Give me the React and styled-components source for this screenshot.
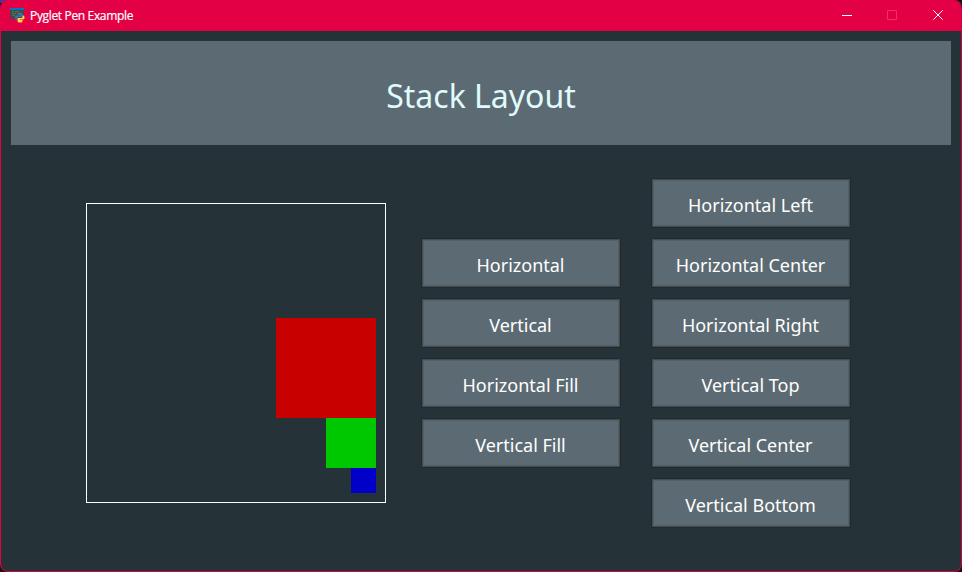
import React from "react";
import styled, { createGlobalStyle } from "styled-components";

const GlobalStyle = createGlobalStyle`
  html, body { margin: 0; background: #0b0b0d; overflow: hidden; }
  * { box-sizing: border-box; }
`;

const Desktop = styled.div`
  width: 962px;
  height: 572px;
  background: linear-gradient(to right, #55309b 0 8px, transparent 8px) 0 0 / 100% 3px no-repeat, #1a1114;
`;

const Window = styled.div`
  display: flex;
  flex-direction: column;
  width: 962px;
  height: 572px;
  border: 1px solid #e30045;
  border-top: 0;
  border-right-color: #c8063f;
  border-bottom-color: #c8063f;
  border-radius: 8px;
  background: #253237;
  overflow: hidden;
  font-family: "Noto Sans", sans-serif;
`;

const TitleBar = styled.header`
  display: flex;
  align-items: center;
  flex: none;
  height: 31px;
  padding-left: 8px;
  background: #e30045;
  color: #fff;
`;

const AppIcon = styled.svg`
  display: block;
  flex: none;
  margin-bottom: 1px;
`;

const WindowTitle = styled.span`
  flex: 1;
  margin-left: 5px;
  font-family: "Open Sans", "Noto Sans", sans-serif;
  font-size: 12px;
  line-height: 16px;
  letter-spacing: -0.34px;
  -webkit-text-stroke: 0.2px #fff;
`;

const WindowButton = styled.button`
  display: grid;
  place-items: center;
  width: 46px;
  height: 31px;
  padding: 0 0 1px;
  border: 0;
  background: none;
  color: ${(p) => (p.disabled ? "#ee3069" : "#fff")};
`;

const Client = styled.main`
  display: flex;
  flex-direction: column;
  flex: 1;
  padding: 10px 10px 0;
`;

const Banner = styled.h1`
  flex: none;
  height: 104px;
  margin: 0;
  padding: 3px 0 0;
  background: #5c6b73;
  color: #e0fbfc;
  font-size: 32px;
  font-weight: 400;
  line-height: 104px;
  text-align: center;
`;

const Content = styled.div`
  display: flex;
  align-items: center;
  height: 416px;
  padding-left: 75px;
`;

const StackView = styled.div`
  display: flex;
  flex-direction: column;
  align-items: flex-end;
  justify-content: flex-end;
  width: 300px;
  height: 300px;
  padding: 9px;
  border: 1px solid #fff;
`;

const Square = styled.div`
  width: ${(p) => p.$size}px;
  height: ${(p) => p.$size}px;
  background: ${(p) => p.$color};
`;

const ButtonColumn = styled.div`
  display: flex;
  flex-direction: column;
  gap: 10px;
  margin-left: ${(p) => p.$offset}px;
`;

const LayoutButton = styled.button`
  width: 200px;
  height: 50px;
  padding: 4px 1px 0 0;
  border: 1px solid #242a2b;
  background: #5c6b73;
  box-shadow: inset 0 0 0 1px #414b50, inset 0 0 0 2px #536067;
  color: #fff;
  font-family: "Noto Sans", sans-serif;
  font-size: 18px;
  line-height: 24px;
`;

const squares = [
  { size: 100, color: "#c80000" },
  { size: 50, color: "#00c800" },
  { size: 25, color: "#0000c8" },
];
const directions = ["Horizontal", "Vertical", "Horizontal Fill", "Vertical Fill"];
const alignments = [
  "Horizontal Left",
  "Horizontal Center",
  "Horizontal Right",
  "Vertical Top",
  "Vertical Center",
  "Vertical Bottom",
];

function PythonIcon() {
  return (
    <AppIcon width="16" height="16" viewBox="0 0 16 16">
      <path fill="#46484b" d="M1 1h14v11H1z" />
      <path fill="#0872bd" d="M1 1h14v2H1z" />
      <path stroke="#38a957" strokeWidth=".6" d="M3 4.500h2M6 4.500h4M3 6.500h4M3 8.500h3" />
      <path
        fill="#3973a5"
        d="M10.500 5.500c-1.600 0-2 .7-2 1.500v1h2.700v.5H7.500C6.400 8.500 6 9.500 6 10.600c0 1.200.5 2 1.500 2h.8v-1.200c0-.8.6-1.400 1.400-1.400h2.600c.7 0 1.200-.5 1.200-1.200V7c0-1-.9-1.500-3-1.500z"
      />
      <path
        fill="#ffd34d"
        d="M11.500 15.500c1.600 0 2-.7 2-1.500v-1h-2.700v-.5h3.200c1 0 1.500-.9 1.500-2s-.4-2-1.300-2h-.7V9.700c0 .8-.6 1.300-1.300 1.300H9.700c-.7 0-1.200.6-1.200 1.200V14c0 1 .9 1.500 3 1.500z"
      />
    </AppIcon>
  );
}

export default function App() {
  return (
    <Desktop>
      <GlobalStyle />
      <Window>
        <TitleBar>
          <PythonIcon />
          <WindowTitle>Pyglet Pen Example</WindowTitle>
          <WindowButton aria-label="Minimize">
            <svg width="12" height="10" viewBox="0 0 12 10">
              <path d="M2 5.500h10" stroke="currentColor" />
            </svg>
          </WindowButton>
          <WindowButton aria-label="Maximize" disabled>
            <svg width="10" height="10" viewBox="0 0 10 10">
              <rect x=".5" y=".5" width="9" height="9" rx=".5" fill="none" stroke="currentColor" />
            </svg>
          </WindowButton>
          <WindowButton aria-label="Close">
            <svg width="10" height="10" viewBox="0 0 10 10">
              <path d="M.3.3l9.400 9.400M9.700.3L.3 9.700" stroke="currentColor" />
            </svg>
          </WindowButton>
        </TitleBar>
        <Client>
          <Banner>Stack Layout</Banner>
          <Content>
            <StackView>
              {squares.map((s) => (
                <Square key={s.color} $size={s.size} $color={s.color} />
              ))}
            </StackView>
            <ButtonColumn $offset={35}>
              {directions.map((label) => (
                <LayoutButton key={label}>{label}</LayoutButton>
              ))}
            </ButtonColumn>
            <ButtonColumn $offset={30}>
              {alignments.map((label) => (
                <LayoutButton key={label}>{label}</LayoutButton>
              ))}
            </ButtonColumn>
          </Content>
        </Client>
      </Window>
    </Desktop>
  );
}
